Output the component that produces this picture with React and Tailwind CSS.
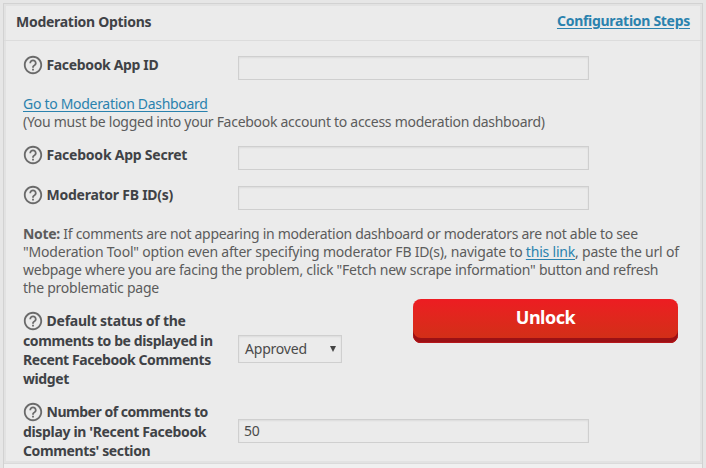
import { MdHelpOutline } from "react-icons/md";

const Line = ({ children, className = "" }) => (
  <div className="flex">
    <span className={`whitespace-pre ${className}`}>{children}</span>
  </div>
);

const HelpIcon = () => (
  <MdHelpOutline className="-ml-px size-[22px] shrink-0 text-[#6a6a6a]" />
);

const Label = ({ first, className = "", rest = [] }) => (
  <div className="w-[215px] shrink-0 font-bold leading-[19px] text-[#3f4246]">
    <div className="flex h-5 items-center gap-[2.5px]">
      <HelpIcon />
      <span className={`whitespace-pre pb-[2px] ${className}`}>{first}</span>
    </div>
    {rest.map(([text, cls]) => (
      <Line key={text} className={cls}>{text}</Line>
    ))}
  </div>
);

const Field = ({ value = "", className = "" }) => (
  <input
    defaultValue={value}
    className={`h-6 w-[351px] border border-[#cfcfcf] bg-[#ebebeb] px-[5px] pb-[2px] text-[14px] tracking-[-0.2px] text-[#4a4a4a] shadow-[inset_0_1px_2px_rgba(0,0,0,0.07)] outline-none ${className}`}
  />
);

const link = "text-[#2a82ae] underline underline-offset-2";

export default function App() {
  return (
    <div className="h-[468px] w-[706px] overflow-hidden bg-[#e6e6e6] pl-[3px] pr-[3px] pt-[3px] font-['Noto_Sans','Open_Sans',sans-serif] text-[14px] text-[#5c5c5c]">
      <div className="h-[465px] border-x border-t border-[#d2d2d2] bg-[#f0f0f0]">
        <div className="h-[460px] border-b border-[#dadada] bg-[#ebebeb] shadow-[inset_0_0_0_2px_#e2e2e2]">
          <header className="flex h-[37px] items-center justify-between border-b border-[#dcdcdc] pl-3 pr-3 pb-[3px] font-bold">
            <h3 className="pt-px tracking-[-0.28px] text-[#3f4246]">Moderation Options</h3>
            <a className={`tracking-[-0.29px] ${link}`}>Configuration Steps</a>
          </header>
          <main className="pl-[19px]">
            <div className="flex pt-[14px]">
              <Label first="Facebook App ID" className="tracking-[-0.35px]" />
              <Field className="mt-px" />
            </div>
            <div className="mt-[15px] leading-[18px]">
              <Line className="tracking-[-0.3px]"><a className={link}>Go to Moderation Dashboard</a></Line>
              <Line className="tracking-[-0.28px]">(You must be logged into your Facebook account to access moderation dashboard)</Line>
            </div>
            <div className="mt-[14px] flex h-10">
              <Label first="Facebook App Secret" className="tracking-[-0.23px]" />
              <Field className="mt-px" />
            </div>
            <div className="flex h-10">
              <Label first="Moderator FB ID(s)" className="tracking-[-0.25px]" />
              <Field className="mt-px" />
            </div>
            <div className="leading-[18px]">
              <Line className="tracking-[-0.3px]"><b>Note:</b> If comments are not appearing in moderation dashboard or moderators are not able to see</Line>
              <Line className="tracking-[-0.2px]">"Moderation Tool" option even after specifying moderator FB ID(s), navigate to <a className={link}>this link</a>, paste the url of</Line>
              <Line className="tracking-[-0.25px]">webpage where you are facing the problem, click "Fetch new scrape information" button and refresh</Line>
              <Line className="tracking-[-0.25px]">the problematic page</Line>
            </div>
            <div className="mt-[14px] flex h-[91px] items-start">
              <Label
                first="Default status of the"
                className="tracking-[-0.23px]"
                rest={[
                  ["comments to be displayed in", "tracking-[-0.4px]"],
                  ["Recent Facebook Comments", "tracking-[-0.42px]"],
                  ["widget", "tracking-[-0.4px]"],
                ]}
              />
              <div className="mt-6 flex h-7 w-[104px] items-center justify-between border border-[#cfcfcf] bg-[#ebebeb] pl-[6px] pr-[5px] text-[#4a4a4a] shadow-[inset_0_1px_2px_rgba(0,0,0,0.07)]">
                <span className="pb-[2px] tracking-[-0.2px]">Approved</span>
                <svg className="h-[6px] w-[6px]" viewBox="0 0 6 6"><path d="M0 0h6L3 6z" fill="#444" /></svg>
              </div>
              <button className="-mt-3 ml-[71px] h-[44px] w-[265px] rounded-lg bg-linear-to-b from-[#ed1c22] to-[#cf3016] pb-[7px] text-[18px] font-bold tracking-[-0.5px] text-white shadow-[inset_0_-1px_0_#b5161b,inset_0_-5px_0_#9b1115]">
                Unlock
              </button>
            </div>
            <div className="flex items-start">
              <Label
                first="Number of comments to"
                className="tracking-[-0.48px]"
                rest={[
                  ["display in 'Recent Facebook", "tracking-[-0.34px]"],
                  ["Comments' section", "tracking-[-0.38px]"],
                ]}
              />
              <Field value="50" className="mt-[17px]" />
            </div>
          </main>
        </div>
      </div>
    </div>
  );
}
